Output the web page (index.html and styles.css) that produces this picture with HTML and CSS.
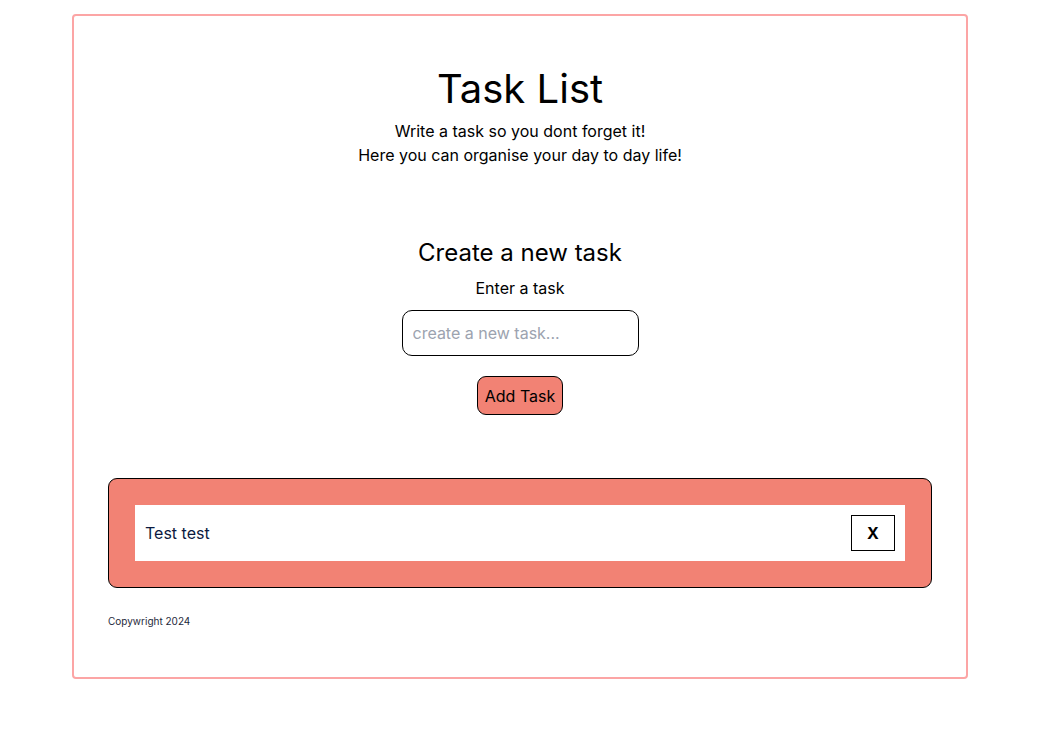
FILE: index.html
```html
<!DOCTYPE html>
<html lang="en">
<head>
<meta charset="utf-8">
<title>Task List</title>
<link rel="stylesheet" href="styles.css">
</head>
<body>
<main class="app">
  <header class="intro">
    <h1 class="title">Task List</h1>
    <p class="subtitle">Write a task so you dont forget it!</p>
    <p class="subtitle">Here you can organise your day to day life!</p>
  </header>
  <section class="create">
    <h2 class="create-title">Create a new task</h2>
    <label class="create-label" for="task">Enter a task</label>
    <input class="task-input" id="task" type="text" placeholder="create a new task...">
    <button class="add-btn" type="button">Add Task</button>
  </section>
  <section class="list">
    <div class="item">
      <span class="item-text">Test test</span>
      <button class="del-btn" type="button">X</button>
    </div>
  </section>
  <footer class="footer">Copywright 2024</footer>
</main>
</body>
</html>
```
FILE: styles.css
```css
* { box-sizing: border-box; }
body {
  margin: 0;
  font-family: Inter, "Noto Sans", sans-serif;
  color: #000;
  background: #fff;
}
.app {
  width: 896px;
  margin: 14px 0 0 72px;
  height: 665px;
  border: 2px solid #fca5a5;
  border-radius: 4px;
  padding: 47px 34px 0;
}
.intro {
  display: flex;
  flex-direction: column;
  align-items: center;
}
.title {
  margin: 0 0 4px;
  font-size: 40px;
  line-height: 52px;
  font-weight: 400;
}
.subtitle {
  margin: 0;
  font-size: 16px;
  line-height: 24px;
}
.create {
  display: flex;
  flex-direction: column;
  align-items: center;
  margin-top: 71px;
}
.create-title {
  margin: 0 0 8px;
  font-size: 24px;
  line-height: 30px;
  font-weight: 400;
}
.create-label {
  font-size: 16px;
  line-height: 24px;
}
.task-input {
  margin-top: 10px;
  width: 237px;
  height: 46px;
  border: 1px solid #000;
  border-radius: 10px;
  padding: 0 10px;
  font-family: inherit;
  font-size: 16px;
  color: #000;
}
.task-input::placeholder { color: #9ca3af; }
.add-btn {
  margin-top: 20px;
  height: 39px;
  padding: 0 7px;
  border: 1px solid #000;
  border-radius: 9px;
  background: #f28274;
  font-family: inherit;
  font-size: 16px;
  color: #000;
}
.list {
  margin-top: 63px;
  border: 1px solid #000;
  border-radius: 9px;
  background: #f28274;
  padding: 26px;
}
.item {
  background: #fff;
  height: 56px;
  display: flex;
  align-items: center;
  justify-content: space-between;
  padding: 0 10px;
}
.item-text {
  font-size: 16px;
  color: #0c1a40;
}
.del-btn {
  width: 44px;
  height: 36px;
  border: 1px solid #000;
  background: #fff;
  font-family: inherit;
  font-size: 16px;
  font-weight: 700;
  color: #000;
  padding: 0;
}
.footer {
  margin-top: 26px;
  font-size: 10px;
  line-height: 14px;
  color: #1e293b;
}
```
